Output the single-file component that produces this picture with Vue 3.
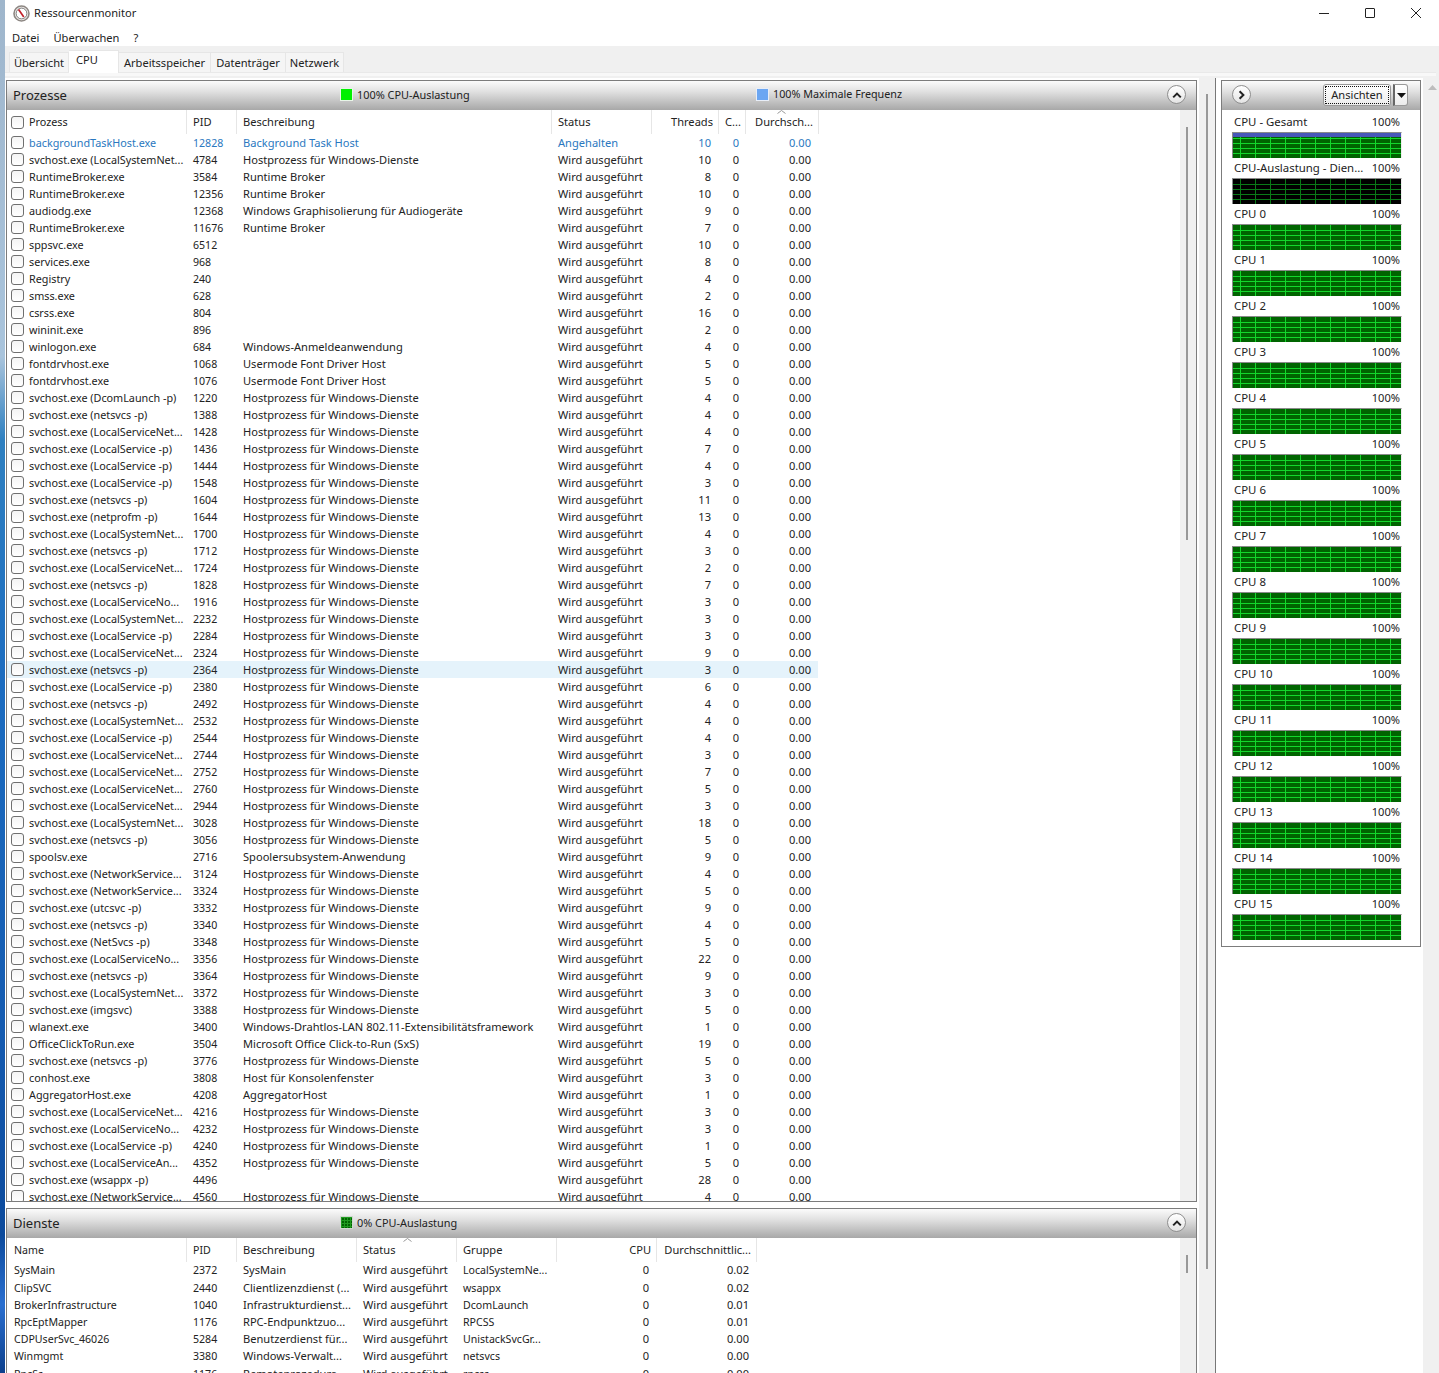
<script setup>
const H = 'Hostprozess für Windows-Dienste'
const s = (x) => 'svchost.exe (' + x
const LSN = 'LocalSystemNet...', LN = 'LocalServiceNet...', LP = 'LocalService -p)', NP = 'netsvcs -p)', LNo = 'LocalServiceNo...', NS = 'NetworkService...'
const procs = [
  ['backgroundTaskHost.exe', 12828, 'Background Task Host', 10, 'sus'],
  [s(LSN), 4784, H, 10], ['RuntimeBroker.exe', 3584, 'Runtime Broker', 8], ['RuntimeBroker.exe', 12356, 'Runtime Broker', 10],
  ['audiodg.exe', 12368, 'Windows Graphisolierung für Audiogeräte', 9], ['RuntimeBroker.exe', 11676, 'Runtime Broker', 7],
  ['sppsvc.exe', 6512, '', 10], ['services.exe', 968, '', 8], ['Registry', 240, '', 4], ['smss.exe', 628, '', 2], ['csrss.exe', 804, '', 16], ['wininit.exe', 896, '', 2],
  ['winlogon.exe', 684, 'Windows-Anmeldeanwendung', 4], ['fontdrvhost.exe', 1068, 'Usermode Font Driver Host', 5], ['fontdrvhost.exe', 1076, 'Usermode Font Driver Host', 5],
  [s('DcomLaunch -p)'), 1220, H, 4], [s(NP), 1388, H, 4], [s(LN), 1428, H, 4], [s(LP), 1436, H, 7], [s(LP), 1444, H, 4], [s(LP), 1548, H, 3],
  [s(NP), 1604, H, 11], [s('netprofm -p)'), 1644, H, 13], [s(LSN), 1700, H, 4], [s(NP), 1712, H, 3], [s(LN), 1724, H, 2], [s(NP), 1828, H, 7],
  [s(LNo), 1916, H, 3], [s(LSN), 2232, H, 3], [s(LP), 2284, H, 3], [s(LN), 2324, H, 9], [s(NP), 2364, H, 3, 'hot'], [s(LP), 2380, H, 6], [s(NP), 2492, H, 4],
  [s(LSN), 2532, H, 4], [s(LP), 2544, H, 4], [s(LN), 2744, H, 3], [s(LN), 2752, H, 7], [s(LN), 2760, H, 5], [s(LN), 2944, H, 3], [s(LSN), 3028, H, 18], [s(NP), 3056, H, 5],
  ['spoolsv.exe', 2716, 'Spoolersubsystem-Anwendung', 9], [s(NS), 3124, H, 4], [s(NS), 3324, H, 5], [s('utcsvc -p)'), 3332, H, 9], [s(NP), 3340, H, 4], [s('NetSvcs -p)'), 3348, H, 5],
  [s(LNo), 3356, H, 22], [s(NP), 3364, H, 9], [s(LSN), 3372, H, 3], [s('imgsvc)'), 3388, H, 5],
  ['wlanext.exe', 3400, 'Windows-Drahtlos-LAN 802.11-Extensibilitätsframework', 1], ['OfficeClickToRun.exe', 3504, 'Microsoft Office Click-to-Run (SxS)', 19],
  [s(NP), 3776, H, 5], ['conhost.exe', 3808, 'Host für Konsolenfenster', 3], ['AggregatorHost.exe', 4208, 'AggregatorHost', 1],
  [s(LN), 4216, H, 3], [s(LNo), 4232, H, 3], [s(LP), 4240, H, 1], [s('LocalServiceAn...'), 4352, H, 5], [s('wsappx -p)'), 4496, '', 28], [s(NS), 4560, H, 4],
]
const services = [
  ['SysMain', 2372, 'SysMain', 'LocalSystemNe...', '0.02'],
  ['ClipSVC', 2440, 'Clientlizenzdienst (...', 'wsappx', '0.02'],
  ['BrokerInfrastructure', 1040, 'Infrastrukturdienst...', 'DcomLaunch', '0.01'],
  ['RpcEptMapper', 1176, 'RPC-Endpunktzuo...', 'RPCSS', '0.01'],
  ['CDPUserSvc_46026', 5284, 'Benutzerdienst für...', 'UnistackSvcGr...', '0.00'],
  ['Winmgmt', 3380, 'Windows-Verwalt...', 'netsvcs', '0.00'],
  ['RpcSs', 1176, 'Remoteprozedura...', 'rpcss', '0.00'],
]
const graphs = ['CPU - Gesamt', 'CPU-Auslastung - Dien...']
for (let i = 0; i < 16; i++) graphs.push('CPU ' + i)
const tabs = [['Übersicht', 'w1'], ['CPU', 'w2 on'], ['Arbeitsspeicher', 'w3'], ['Datenträger', 'w4'], ['Netzwerk', 'w5']]
</script>

<template>
  <div class="screen">
    <div class="desk"></div>
    <div class="win">
      <header class="title">
        <svg class="appicon" width="17" height="17" viewBox="0 0 17 17">
          <circle cx="8.5" cy="8.5" r="7.5" fill="#f6f2f0" stroke="#8d8783" stroke-width="1.6" />
          <circle cx="8.5" cy="8.5" r="5.4" fill="#fff" stroke="#444" stroke-width=".7" />
          <path d="M5.6 4.4 10.8 12" stroke="#c2202a" stroke-width="1.7" />
        </svg>
        <span>Ressourcenmonitor</span>
        <div class="caps">
          <svg width="12" height="12" viewBox="0 0 12 12"><path d="M1 6.5h10" stroke="#222" /></svg>
          <svg width="12" height="12" viewBox="0 0 12 12"><rect x="1.5" y="1.5" width="9" height="9" rx=".5" fill="none" stroke="#222" /></svg>
          <svg width="12" height="12" viewBox="0 0 12 12"><path d="M1 1l10 10M11 1 1 11" stroke="#222" /></svg>
        </div>
      </header>
      <nav class="menu"><span>Datei</span><span>Überwachen</span><span>?</span></nav>
      <div class="band">
        <div class="tabs">
          <div v-for="t in tabs" :key="t[0]" class="tab" :class="t[1]">{{ t[0] }}</div>
        </div>
        <div class="rule"></div>
      </div>
      <div class="main">
        <div class="leftcol">
          <section class="panel p1">
            <div class="phead">
              <h2>Prozesse</h2>
              <i class="sq green l1"></i><span class="lg lg1">100% CPU-Auslastung</span>
              <i class="sq blue"></i><span class="lg lg2">100% Maximale Frequenz</span>
              <button class="round">
                <svg width="10" height="8" viewBox="0 0 10 8"><path d="M1.2 6.4 5 2.6l3.8 3.8" fill="none" stroke="#222" stroke-width="2" /></svg>
              </button>
            </div>
            <div class="pbody">
              <div class="grid">
                <div class="row hdr ptable">
                  <div class="c first"><i class="cb"></i>Prozess</div>
                  <div class="c">PID</div><div class="c">Beschreibung</div><div class="c">Status</div>
                  <div class="c r">Threads</div><div class="c ctr">C...</div>
                  <div class="c r sorted">Durchsch...<svg class="caret" width="9" height="4" viewBox="0 0 9 4"><path d="M.5 3.5l4-3 4 3" fill="none" stroke="#999" /></svg></div>
                </div>
                <div v-for="p in procs" :key="p[1]" class="row ptable" :class="p[4]">
                  <div class="c first"><i class="cb"></i>{{ p[0] }}</div>
                  <div class="c pid">{{ p[1] }}</div><div class="c">{{ p[2] }}</div>
                  <div class="c">{{ p[4] === 'sus' ? 'Angehalten' : 'Wird ausgeführt' }}</div>
                  <div class="c r">{{ p[3] }}</div><div class="c r cpu">0</div><div class="c r">0.00</div>
                </div>
              </div>
              <div class="track t1"><b></b></div>
            </div>
          </section>
          <section class="panel p2">
            <div class="phead">
              <h2>Dienste</h2>
              <i class="sq dark l1"></i><span class="lg lg1">0% CPU-Auslastung</span>
              <button class="round">
                <svg width="10" height="8" viewBox="0 0 10 8"><path d="M1.2 6.4 5 2.6l3.8 3.8" fill="none" stroke="#222" stroke-width="2" /></svg>
              </button>
            </div>
            <div class="pbody">
              <div class="grid">
                <div class="row hdr stable">
                  <div class="c nm">Name</div><div class="c pid">PID</div><div class="c">Beschreibung</div>
                  <div class="c sorted">Status<svg class="caret c2" width="9" height="4" viewBox="0 0 9 4"><path d="M.5 3.5l4-3 4 3" fill="none" stroke="#999" /></svg></div>
                  <div class="c">Gruppe</div><div class="c r">CPU</div><div class="c r">Durchschnittlic...</div>
                </div>
                <div v-for="v in services" :key="v[0]" class="row stable srow">
                  <div class="c nm">{{ v[0] }}</div><div class="c pid">{{ v[1] }}</div><div class="c">{{ v[2] }}</div>
                  <div class="c">Wird ausgeführt</div><div class="c nm">{{ v[3] }}</div><div class="c r">0</div><div class="c r">{{ v[4] }}</div>
                </div>
              </div>
              <div class="track t2"><b></b></div>
            </div>
          </section>
        </div>
        <div class="track outer"><b></b></div>
        <div class="rightpane">
          <aside class="gpanel">
            <div class="ghead">
              <button class="round">
                <svg width="8" height="10" viewBox="0 0 8 10"><path d="M1.6 1.2 5.4 5 1.6 8.8" fill="none" stroke="#222" stroke-width="2" /></svg>
              </button>
              <div class="views">
                <button class="view"><span>Ansichten</span></button>
                <button class="drop"><svg width="9" height="5" viewBox="0 0 9 5"><path d="M0 0h9L4.5 5z" fill="#111" /></svg></button>
              </div>
            </div>
            <div class="glist">
              <div v-for="(g, i) in graphs" :key="g" class="gitem">
                <div class="glabel"><span class="gname">{{ g }}</span><span>100%</span></div>
                <div class="graph" :class="{ idle: i === 1 }"><u v-if="i === 0"></u></div>
              </div>
            </div>
          </aside>
        </div>
        <div class="gutter"><svg width="9" height="5" viewBox="0 0 9 5"><path d="M0 5h9L4.5 0z" fill="#bdbdbd" /></svg></div>
      </div>
    </div>
  </div>
</template>

<style scoped>
.screen { width: 1439px; height: 1373px; display: flex; overflow: hidden; font: 11.1px/17px "Noto Sans", sans-serif; color: #222; }
.desk { width: 5px; flex: none; background: linear-gradient(#9fb6cc, #a9c4dc 26%, #2f80c0 32%, #1c6cc0 50%, #155bb0 75%, #0c4a9c 90%, #2a6fd0 95%, #0c3f8c); }
.win { flex: 1; min-width: 0; display: flex; flex-direction: column; background: #fff; }
.title { height: 28px; flex: none; display: flex; align-items: center; padding-left: 8px; gap: 4px; padding-top: 0; }
.appicon { margin-top: -2px; }
.title span { margin-top: -3px; }
.caps { margin-left: auto; display: flex; gap: 34px; padding-right: 17px; margin-top: -3px; }
.menu { height: 18px; flex: none; display: flex; gap: 14px; padding-left: 7px; line-height: 19px; }
.band { height: 32px; flex: none; background: #f0f0f0; position: relative; }
.tabs { display: flex; height: 26px; align-items: flex-end; padding-left: 4px; }
.tab { height: 20px; line-height: 19px; background: #f5f5f5; border: 1px solid #e6e6e6; border-bottom: 0; border-left: 0; text-align: center; box-sizing: border-box; }
.w1 { width: 60px; border-left: 1px solid #e6e6e6; }
.w2 { width: 50px; }
.w3 { width: 92px; }
.w4 { width: 75px; }
.w5 { width: 58px; }
.tab.on { height: 23px; background: #fff; line-height: 18px; text-align: left; padding-left: 7px; margin-bottom: -1px; }
.rule { height: 4px; background: #f8f8f8; border-top: 1px solid #e9e9e9; box-sizing: border-box; margin-right: 3px; }
.main { flex: 1; min-height: 0; display: flex; }
.leftcol { width: 1194px; flex: none; padding: 2px 2px 0 1px; box-sizing: border-box; background: #fff; display: flex; flex-direction: column; gap: 6px; }
.panel { border: 1px solid #7c7c7c; background: #fff; display: flex; flex-direction: column; overflow: hidden; box-sizing: border-box; }
.p1 { height: 1122px; flex: none; }
.p2 { flex: 1; min-height: 0; border-bottom: 0; }
.phead { height: 29px; flex: none; position: relative; background: linear-gradient(#fbfbfb, #e2e2e2 35%, #a8a8a8); }
.phead h2 { margin: 0; font-weight: 400; font-size: 13px; line-height: 28px; padding-left: 6px; color: #222; }
.sq { position: absolute; top: 7px; width: 13px; height: 13px; box-sizing: border-box; }
.l1 { left: 333px; }
.green { background: #00f000; border: 1px solid #e8f5e8; }
.blue { left: 749px; background: #6ba6f2; border: 1px solid #e8eef8; }
.dark { background-color: #006400; background-image: linear-gradient(90deg, #1f9a1f 1px, transparent 1px), linear-gradient(#1f9a1f 1px, transparent 1px); background-size: 3px 3px; border: 1px solid #cfd8cf; }
.lg { position: absolute; top: 5px; line-height: 17px; color: #222; font-size: 10.9px; }
.lg1 { left: 350px; }
.lg2 { left: 766px; font-size: 10.75px; }
.round { position: absolute; right: 10px; top: 4px; width: 19px; height: 19px; padding: 0; border-radius: 50%; border: 1px solid #8f8f8f; background: linear-gradient(#fff, #e4e4e4); display: flex; align-items: center; justify-content: center; }
.pbody { flex: 1; min-height: 0; display: flex; overflow: hidden; }
.grid { width: 1173px; flex: none; overflow: hidden; }
.row { display: grid; height: 17px; position: relative; line-height: 18px; }
.ptable { grid-template-columns: 179px 50px 315px 100px 67px 27px 73px; width: 811px; }
.stable { grid-template-columns: 179px 50px 120px 100px 100px 100px 100px; width: 749px; }
.c { padding-left: 7px; white-space: nowrap; overflow: hidden; }
.first { padding-left: 4px; display: flex; align-items: center; font-size: 10.8px; }
.pid, .nm { font-size: 10.6px; }
.r { text-align: right; padding: 0 7px 0 0; }
.ctr { text-align: left; padding-left: 7px; }
.cpu { padding-right: 6px; }
.srow { height: 17.2px; }
.hdr { height: 24px; line-height: 24px; }
.stable.hdr { height: 23.4px; }
.hdr .c { box-shadow: 1px 0 #e6e6e6; overflow: visible; position: relative; }
.hdr .r { padding-right: 5px; }
.cb { display: block; width: 13px; height: 13px; box-sizing: border-box; border: 1px solid #6f6f6f; border-radius: 3px; margin-right: 5px; flex: none; background: linear-gradient(#f4f4f4, #fff); }
.sus { color: #2a78c0; }
.hot { background: #e5f3fb; }
.caret { position: absolute; top: 0; left: 32px; }
.c2 { left: 47px; }
.track { flex: none; background: #f0f0f0; box-sizing: border-box; }
.track b { display: block; width: 2px; background: #989898; }
.t1, .t2 { width: 16px; padding-left: 6px; }
.t1 { padding-top: 17px; }
.t1 b { height: 413px; }
.t2 { padding-top: 17px; }
.t2 b { height: 18px; }
.outer { padding: 16px 0 0 7px; border-right: 1px solid #777; width: 17px; }
.outer b { height: 1175px; }
.rightpane { width: 207px; flex: none; padding: 2px 2px 0 5px; box-sizing: border-box; background: #fff; }
.gpanel { width: 200px; height: 867px; box-sizing: border-box; border: 1px solid #7c7c7c; background: #fff; }
.ghead { height: 29px; position: relative; background: linear-gradient(#fbfbfb, #e2e2e2 35%, #a8a8a8); }
.ghead .round { right: auto; left: 10px; }
.views { position: absolute; left: 101px; top: 3px; display: flex; }
.view { width: 68px; height: 22px; padding: 1px; border: 1px solid #999; border-radius: 3px; background: linear-gradient(#fff, #ececec); font: inherit; color: #222; box-sizing: border-box; }
.view span { display: block; height: 18px; line-height: 15px; border: 1px dotted #111; box-sizing: border-box; }
.drop { width: 15px; height: 22px; margin-left: 2px; padding: 0 0 0 1px; border: 1px solid #999; border-left: 2px solid #666; border-radius: 0 3px 3px 0; background: linear-gradient(#fff, #ececec); display: flex; align-items: center; justify-content: center; box-sizing: border-box; }
.glist { padding: 2px 0 0 10px; }
.gitem { height: 46px; }
.glabel { display: flex; justify-content: space-between; width: 168px; padding-left: 2px; line-height: 19px; height: 20px; box-sizing: border-box; white-space: nowrap; }
.gname { font-size: 11.4px; }
.graph { --l: #13d82c; position: relative; width: 170px; height: 26px; box-sizing: border-box; border-top: 1px solid #8a8a8a; border-left: 1px solid #8a8a8a; border-right: 1px solid #eee; background-color: #006400;
  background-image:
    linear-gradient(90deg, var(--l) 1px, transparent 1px),
    linear-gradient(transparent 5px, var(--l) 5px, var(--l) 6px, transparent 6px, transparent 10px, var(--l) 10px, var(--l) 11px, transparent 11px, transparent 15px, var(--l) 15px, var(--l) 16px, transparent 16px, transparent 20px, var(--l) 20px, var(--l) 21px, transparent 21px);
  background-size: 15px 100%, 100% 100%;
  background-position: 7px 0, 0 0;
}
.graph.idle { --l: #0a7a18; background-color: #000; }
.graph u { display: block; height: 4px; background: #4757b8; }
.gutter { flex: 1; background: #f0f0f0; padding: 7px 0 0 5px; box-sizing: border-box; }
.gutter svg { display: block; }
</style>

<style>
html, body { margin: 0; overflow: hidden; background: #fff; }
</style>
